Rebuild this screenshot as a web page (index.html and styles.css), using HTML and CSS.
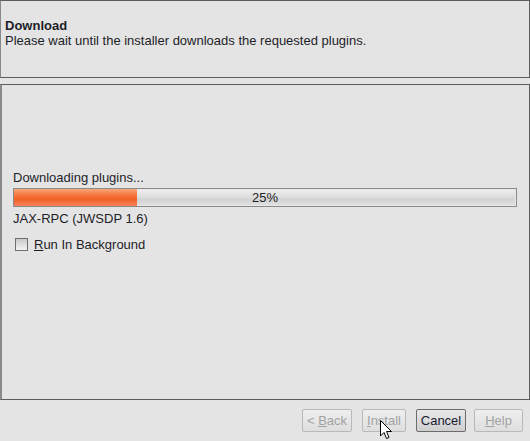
FILE: index.html
```html
<!DOCTYPE html>
<html>
<head>
<meta charset="utf-8">
<link rel="stylesheet" href="styles.css">
</head>
<body>
<div class="dialog">
  <div class="header">
    <div class="title">Download</div>
    <div class="subtitle">Please wait until the installer downloads the requested plugins.</div>
  </div>
  <div class="content">
    <div class="label">Downloading plugins...</div>
    <div class="progress">
      <div class="fill" style="width:24.6%"></div>
      <span class="pct">25%</span>
    </div>
    <div class="label item">JAX-RPC (JWSDP 1.6)</div>
    <label class="check">
      <span class="box"></span>
      <span><u>R</u>un In Background</span>
    </label>
  </div>
  <div class="buttons">
    <button class="btn disabled back">&lt; <u>B</u>ack</button>
    <button class="btn disabled install"><u>I</u>nstall</button>
    <button class="btn cancel">Cancel</button>
    <button class="btn disabled help"><u>H</u>elp</button>
  </div>
  <svg class="cursor" width="14" height="20" viewBox="0 0 14 20">
    <path d="M0.5 0.5 L0.5 16 L4 12.5 L6.5 18.5 L9 17.5 L6.5 11.5 L11.5 11.5 Z" fill="#fff" stroke="#000" stroke-width="1"/>
  </svg>
</div>
</body>
</html>
```

FILE: styles.css
```css
* { box-sizing: border-box; }
html, body { margin: 0; padding: 0; background: #e4e4e4; }
body {
  font-family: "Liberation Sans", Arial, sans-serif;
  font-size: 13px;
  color: #1e1e28;
}
.dialog {
  position: relative;
  width: 530px;
  height: 441px;
  display: flex;
  flex-direction: column;
}
.header {
  height: 78px;
  border: 1px solid #5c5c5c;
  border-left-color: #888;
  padding: 17px 0 0 4px;
  line-height: 15px;
}
.title { font-weight: bold; }
.content {
  margin-top: 6px;
  height: 316px;
  border: 1px solid #5c5c5c;
  border-left: 2px solid #8a8a8a;
  padding: 85px 12px 0 11px;
  display: flex;
  flex-direction: column;
}
.label { line-height: 15px; }
.progress {
  position: relative;
  margin-top: 3px;
  height: 19px;
  border: 1px solid #8a8a8a;
  background: linear-gradient(#f0f0f0, #dcdcdc 50%, #d2d2d2 60%, #e2e2e2);
  box-shadow: inset 0 0 0 1px #e8e8e8;
}
.fill {
  height: 100%;
  background: linear-gradient(#f9a77c, #f6763e 35%, #f26226 60%, #f7835a);
}
.pct {
  position: absolute;
  left: 0; right: 0; top: 0;
  text-align: center;
  line-height: 17px;
  color: #222;
}
.item { margin-top: 4px; }
.check {
  display: flex;
  align-items: center;
  gap: 6px;
  margin-top: 11px;
  margin-left: 2px;
  line-height: 15px;
}
.box {
  width: 13px;
  height: 13px;
  border: 1px solid #6e6e6e;
  background: linear-gradient(#c8c8c8, #f4f4f4);
}
.buttons {
  flex: 1;
  display: flex;
  justify-content: flex-end;
  align-items: flex-start;
  padding: 9px 7px 0 0;
}
.btn {
  font-family: "Liberation Sans", Arial, sans-serif;
  font-size: 13px;
  height: 23px;
  padding: 0;
  border-radius: 2px;
  background: linear-gradient(#efefef, #dedede);
  border: 1px solid #b8b8b8;
  color: #a2a2a2;
}
.back { width: 50px; }
.install { width: 44px; margin-left: 10px; }
.cancel {
  width: 50px;
  margin-left: 10px;
  border-color: #6c6c6c;
  color: #1a1a30;
  background: linear-gradient(#e8e8e8, #cfcfcf);
}
.help { width: 49px; margin-left: 8px; }
.cursor {
  position: absolute;
  left: 380px;
  top: 420px;
}
```
